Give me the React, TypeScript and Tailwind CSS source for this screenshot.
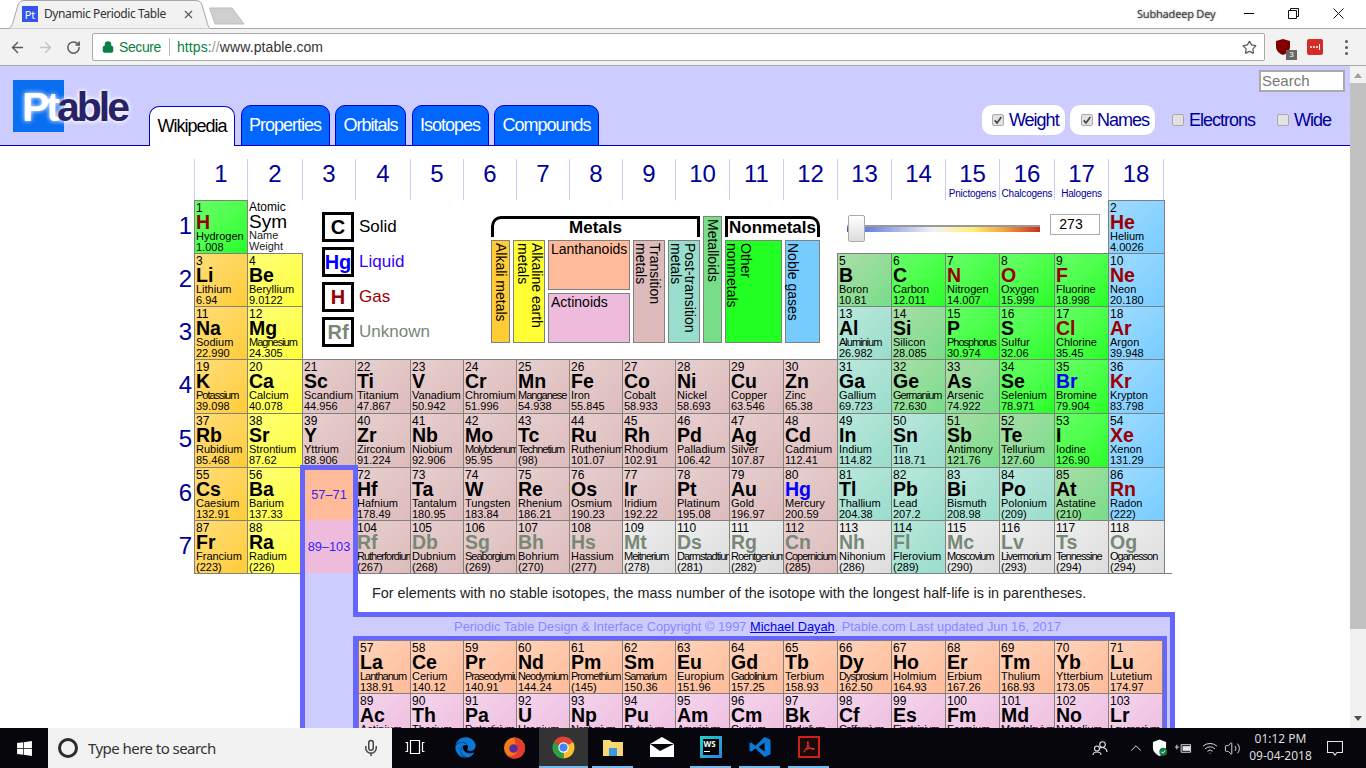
import { ArrowLeft, ArrowRight, ChevronUp, Lock, Mic, RotateCw, Star, Volume2, Wifi, X } from 'lucide-react';
import { FaEdge, FaWindows } from 'react-icons/fa';

type Cat = 'alkali' | 'earth' | 'lan' | 'act' | 'trans' | 'post' | 'semi' | 'non' | 'noble' | 'none';
type El = [number, string, string, string, Cat, ('g' | 'l' | 'u')?];

const catBg: Record<Cat, string> = {
  alkali: 'from-[#ffdd77] to-[#ffcc33]',
  earth: 'from-[#ffff77] to-[#ffff33]',
  lan: 'from-[#ffd4bb] to-[#ffbb99]',
  act: 'from-[#f4d6ee] to-[#eebbdd]',
  trans: 'from-[#e8d0d0] to-[#ddbbbb]',
  post: 'from-[#bbe8dc] to-[#99ddcc]',
  semi: 'from-[#aadda8] to-[#77dd88]',
  non: 'from-[#66ff66] to-[#22ff22]',
  noble: 'from-[#a0dcff] to-[#77ccff]',
  none: 'from-[#efefef] to-[#dddddd]',
};

const stateText = { g: 'text-[#990000]', l: 'text-[#0000ff]', u: 'text-[#778877]' };

// names the site squeezes so they fit the cell
const tight = new Set([
  'Aluminium', 'Magnesium', 'Phosphorus', 'Potassium', 'Manganese', 'Molybdenum', 'Technetium', 'Germanium',
  'Meitnerium', 'Darmstadtium', 'Roentgenium', 'Copernicium', 'Rutherfordium', 'Seaborgium', 'Livermorium',
  'Tennessine', 'Moscovium', 'Oganesson', 'Lanthanum', 'Praseodymium', 'Neodymium', 'Promethium', 'Samarium',
  'Gadolinium', 'Dysprosium', 'Protactinium', 'Neptunium', 'Plutonium', 'Americium', 'Californium',
  'Einsteinium', 'Mendelevium', 'Lawrencium', 'Berkelium',
]);

const row1a: El[] = [[1, 'H', 'Hydrogen', '1.008', 'non', 'g']];
const row1b: El[] = [[2, 'He', 'Helium', '4.0026', 'noble', 'g']];
const row2: El[] = [
  [3, 'Li', 'Lithium', '6.94', 'alkali'], [4, 'Be', 'Beryllium', '9.0122', 'earth'],
  [5, 'B', 'Boron', '10.81', 'semi'], [6, 'C', 'Carbon', '12.011', 'non'], [7, 'N', 'Nitrogen', '14.007', 'non', 'g'],
  [8, 'O', 'Oxygen', '15.999', 'non', 'g'], [9, 'F', 'Fluorine', '18.998', 'non', 'g'], [10, 'Ne', 'Neon', '20.180', 'noble', 'g'],
];
const row3: El[] = [
  [11, 'Na', 'Sodium', '22.990', 'alkali'], [12, 'Mg', 'Magnesium', '24.305', 'earth'],
  [13, 'Al', 'Aluminium', '26.982', 'post'], [14, 'Si', 'Silicon', '28.085', 'semi'], [15, 'P', 'Phosphorus', '30.974', 'non'],
  [16, 'S', 'Sulfur', '32.06', 'non'], [17, 'Cl', 'Chlorine', '35.45', 'non', 'g'], [18, 'Ar', 'Argon', '39.948', 'noble', 'g'],
];
const row4: El[] = [
  [19, 'K', 'Potassium', '39.098', 'alkali'], [20, 'Ca', 'Calcium', '40.078', 'earth'], [21, 'Sc', 'Scandium', '44.956', 'trans'],
  [22, 'Ti', 'Titanium', '47.867', 'trans'], [23, 'V', 'Vanadium', '50.942', 'trans'], [24, 'Cr', 'Chromium', '51.996', 'trans'],
  [25, 'Mn', 'Manganese', '54.938', 'trans'], [26, 'Fe', 'Iron', '55.845', 'trans'], [27, 'Co', 'Cobalt', '58.933', 'trans'],
  [28, 'Ni', 'Nickel', '58.693', 'trans'], [29, 'Cu', 'Copper', '63.546', 'trans'], [30, 'Zn', 'Zinc', '65.38', 'trans'],
  [31, 'Ga', 'Gallium', '69.723', 'post'], [32, 'Ge', 'Germanium', '72.630', 'semi'], [33, 'As', 'Arsenic', '74.922', 'semi'],
  [34, 'Se', 'Selenium', '78.971', 'non'], [35, 'Br', 'Bromine', '79.904', 'non', 'l'], [36, 'Kr', 'Krypton', '83.798', 'noble', 'g'],
];
const row5: El[] = [
  [37, 'Rb', 'Rubidium', '85.468', 'alkali'], [38, 'Sr', 'Strontium', '87.62', 'earth'], [39, 'Y', 'Yttrium', '88.906', 'trans'],
  [40, 'Zr', 'Zirconium', '91.224', 'trans'], [41, 'Nb', 'Niobium', '92.906', 'trans'], [42, 'Mo', 'Molybdenum', '95.95', 'trans'],
  [43, 'Tc', 'Technetium', '(98)', 'trans'], [44, 'Ru', 'Ruthenium', '101.07', 'trans'], [45, 'Rh', 'Rhodium', '102.91', 'trans'],
  [46, 'Pd', 'Palladium', '106.42', 'trans'], [47, 'Ag', 'Silver', '107.87', 'trans'], [48, 'Cd', 'Cadmium', '112.41', 'trans'],
  [49, 'In', 'Indium', '114.82', 'post'], [50, 'Sn', 'Tin', '118.71', 'post'], [51, 'Sb', 'Antimony', '121.76', 'semi'],
  [52, 'Te', 'Tellurium', '127.60', 'semi'], [53, 'I', 'Iodine', '126.90', 'non'], [54, 'Xe', 'Xenon', '131.29', 'noble', 'g'],
];
const row6a: El[] = [[55, 'Cs', 'Caesium', '132.91', 'alkali'], [56, 'Ba', 'Barium', '137.33', 'earth']];
const row6b: El[] = [
  [72, 'Hf', 'Hafnium', '178.49', 'trans'], [73, 'Ta', 'Tantalum', '180.95', 'trans'], [74, 'W', 'Tungsten', '183.84', 'trans'],
  [75, 'Re', 'Rhenium', '186.21', 'trans'], [76, 'Os', 'Osmium', '190.23', 'trans'], [77, 'Ir', 'Iridium', '192.22', 'trans'],
  [78, 'Pt', 'Platinum', '195.08', 'trans'], [79, 'Au', 'Gold', '196.97', 'trans'], [80, 'Hg', 'Mercury', '200.59', 'trans', 'l'],
  [81, 'Tl', 'Thallium', '204.38', 'post'], [82, 'Pb', 'Lead', '207.2', 'post'], [83, 'Bi', 'Bismuth', '208.98', 'post'],
  [84, 'Po', 'Polonium', '(209)', 'post'], [85, 'At', 'Astatine', '(210)', 'semi'], [86, 'Rn', 'Radon', '(222)', 'noble', 'g'],
];
const row7a: El[] = [[87, 'Fr', 'Francium', '(223)', 'alkali'], [88, 'Ra', 'Radium', '(226)', 'earth']];
const row7b: El[] = [
  [104, 'Rf', 'Rutherfordium', '(267)', 'trans', 'u'], [105, 'Db', 'Dubnium', '(268)', 'trans', 'u'], [106, 'Sg', 'Seaborgium', '(269)', 'trans', 'u'],
  [107, 'Bh', 'Bohrium', '(270)', 'trans', 'u'], [108, 'Hs', 'Hassium', '(277)', 'trans', 'u'], [109, 'Mt', 'Meitnerium', '(278)', 'none', 'u'],
  [110, 'Ds', 'Darmstadtium', '(281)', 'none', 'u'], [111, 'Rg', 'Roentgenium', '(282)', 'none', 'u'], [112, 'Cn', 'Copernicium', '(285)', 'trans', 'u'],
  [113, 'Nh', 'Nihonium', '(286)', 'none', 'u'], [114, 'Fl', 'Flerovium', '(289)', 'post', 'u'], [115, 'Mc', 'Moscovium', '(290)', 'none', 'u'],
  [116, 'Lv', 'Livermorium', '(293)', 'none', 'u'], [117, 'Ts', 'Tennessine', '(294)', 'none', 'u'], [118, 'Og', 'Oganesson', '(294)', 'none', 'u'],
];
const lanthanides: El[] = [
  [57, 'La', 'Lanthanum', '138.91', 'lan'], [58, 'Ce', 'Cerium', '140.12', 'lan'], [59, 'Pr', 'Praseodymium', '140.91', 'lan'],
  [60, 'Nd', 'Neodymium', '144.24', 'lan'], [61, 'Pm', 'Promethium', '(145)', 'lan'], [62, 'Sm', 'Samarium', '150.36', 'lan'],
  [63, 'Eu', 'Europium', '151.96', 'lan'], [64, 'Gd', 'Gadolinium', '157.25', 'lan'], [65, 'Tb', 'Terbium', '158.93', 'lan'],
  [66, 'Dy', 'Dysprosium', '162.50', 'lan'], [67, 'Ho', 'Holmium', '164.93', 'lan'], [68, 'Er', 'Erbium', '167.26', 'lan'],
  [69, 'Tm', 'Thulium', '168.93', 'lan'], [70, 'Yb', 'Ytterbium', '173.05', 'lan'], [71, 'Lu', 'Lutetium', '174.97', 'lan'],
];
const actinides: El[] = [
  [89, 'Ac', 'Actinium', '(227)', 'act'], [90, 'Th', 'Thorium', '232.04', 'act'], [91, 'Pa', 'Protactinium', '231.04', 'act'],
  [92, 'U', 'Uranium', '238.03', 'act'], [93, 'Np', 'Neptunium', '(237)', 'act'], [94, 'Pu', 'Plutonium', '(244)', 'act'],
  [95, 'Am', 'Americium', '(243)', 'act'], [96, 'Cm', 'Curium', '(247)', 'act'], [97, 'Bk', 'Berkelium', '(247)', 'act'],
  [98, 'Cf', 'Californium', '(251)', 'act'], [99, 'Es', 'Einsteinium', '(252)', 'act'], [100, 'Fm', 'Fermium', '(257)', 'act'],
  [101, 'Md', 'Mendelevium', '(258)', 'act'], [102, 'No', 'Nobelium', '(259)', 'act'], [103, 'Lr', 'Lawrencium', '(266)', 'act'],
];

const groups: [string, string?][] = [
  ['1'], ['2'], ['3'], ['4'], ['5'], ['6'], ['7'], ['8'], ['9'], ['10'], ['11'], ['12'], ['13'], ['14'],
  ['15', 'Pnictogens'], ['16', 'Chalcogens'], ['17', 'Halogens'], ['18'],
];

function Cell({ el }: { el: El }) {
  const [z, sym, name, weight, cat, state] = el;
  return (
    <div className={`-mr-px -mb-px min-w-0 overflow-hidden whitespace-nowrap border border-[#808080] bg-linear-to-br pt-px pl-px text-black ${catBg[cat]}`}>
      <div className="text-[12px] leading-[12px]">{z}</div>
      <div className={`mb-px text-[19.5px] leading-[16px] font-bold ${state ? stateText[state] : ''}`}>{sym}</div>
      <div className={`text-[11px] leading-[10px] ${tight.has(name) ? 'tracking-[-1px]' : ''}`}>{name}</div>
      <div className="text-[11px] leading-[12px]">{weight}</div>
    </div>
  );
}

function Period({ n }: { n: number }) {
  return <div className="flex items-center justify-end pr-[2px] pb-[2px] text-[24px] text-[#000099]">{n}</div>;
}

function StateKey({ sym, label, box, text }: { sym: string; label: string; box: string; text: string }) {
  return (
    <div className="flex items-center gap-[5px]">
      <div className={`flex h-[30px] w-[32px] items-center justify-center border-[3px] border-black text-[20px] font-bold ${box}`}>{sym}</div>
      <span className={`text-[17px] ${text}`}>{label}</span>
    </div>
  );
}

function Legend() {
  return (
    <div className="col-span-10 row-span-3 flex pl-[20px]">
      <div className="flex w-[169px] flex-col gap-[5px] pt-[12px]">
        <StateKey sym="C" label="Solid" box="text-black" text="text-black" />
        <StateKey sym="Hg" label="Liquid" box="text-[#0000ff]" text="text-[#3300ff]" />
        <StateKey sym="H" label="Gas" box="text-[#990000]" text="text-[#990000]" />
        <StateKey sym="Rf" label="Unknown" box="text-[#778877]" text="text-[#778877]" />
      </div>
      <div className="flex gap-[3px] pt-[16px] text-[14px] text-black">
        <div className="w-[209px]">
          <div className="mb-[3px] h-[21px] rounded-tl-[10px] border-x-[3px] border-t-[3px] border-black text-center text-[17px] leading-[18px] font-bold">Metals</div>
          <div className="flex h-[103px] gap-[3px]">
            <div className="w-[19px] border border-[#808080] bg-[#ffcc33] pt-[2px] leading-[17px] [writing-mode:vertical-rl]">Alkali metals</div>
            <div className="w-[32px] border border-[#808080] bg-[#ffff33] pt-[2px] leading-[14px] [writing-mode:vertical-rl]">Alkaline earth<br />metals</div>
            <div className="flex w-[82px] flex-col gap-[3px]">
              <div className="h-[50px] border border-[#808080] bg-[#ffbb99] pl-[2px] leading-[16px]">Lanthanoids</div>
              <div className="h-[50px] border border-[#808080] bg-[#eebbdd] pl-[2px] leading-[16px]">Actinoids</div>
            </div>
            <div className="w-[32px] border border-[#808080] bg-[#ddbbbb] pt-[2px] pr-[2px] leading-[14px] [writing-mode:vertical-rl]">Transition<br />metals</div>
            <div className="w-[32px] border border-[#808080] bg-[#99ddcc] pt-[2px] pr-[2px] leading-[14px] [writing-mode:vertical-rl]">Post-transition<br />metals</div>
          </div>
        </div>
        <div className="h-[127px] w-[19px] border border-[#808080] bg-[#77dd88] pt-[2px] leading-[17px] [writing-mode:vertical-rl]">Metalloids</div>
        <div className="w-[95px]">
          <div className="mb-[3px] h-[21px] rounded-tr-[10px] border-x-[3px] border-t-[3px] border-black text-center text-[17px] leading-[18px] font-bold">Nonmetals</div>
          <div className="flex h-[103px] gap-[3px]">
            <div className="w-[57px] border border-[#808080] bg-[#22ff22] pt-[2px] pr-[28px] leading-[14px] [writing-mode:vertical-rl]">Other<br />nonmetals</div>
            <div className="w-[35px] border border-[#808080] bg-[#77ccff] pt-[2px] pr-[19px] leading-[14px] [writing-mode:vertical-rl]">Noble gases</div>
          </div>
        </div>
      </div>
    </div>
  );
}

function Slider() {
  return (
    <div className="col-span-5 flex pt-[14px] pl-[10px]">
      <div className="relative mt-[11px] h-[7px] w-[193px] border-t-2 border-[#999999]">
        <div className="h-[5px] bg-[linear-gradient(to_right,#3f5fdc,#f3f3f3_45%,#ffee77_65%,#f0a040_82%,#c83020)]" />
        <div className="absolute -top-[12px] left-px h-[27px] w-[17px] rounded-[2px] border border-[#aaaaaa] bg-linear-to-b from-[#ffffff] to-[#dddddd]" />
      </div>
      <div className="ml-[10px] flex h-[21px] w-[50px] items-center justify-center border border-[#aaaaaa] pr-[8px] text-[14px] text-black">273</div>
    </div>
  );
}

function PeriodicTable() {
  return (
    <div className="ml-[175px] grid w-[990px] grid-cols-[19px_53px_55px_53px_55px_53px_53px_53px_53px_53px_54px_54px_54px_54px_54px_54px_55px_54px_56px] grid-rows-[41px_53px_53px_53px_54px_54px_53px_53px]">
      <div />
      {groups.map(([n, label]) => (
        <div key={n} className={`border-l border-[#ccccff] text-center text-[#000099] ${n === '18' ? 'border-r' : ''}`}>
          <div className="text-[24px] leading-[30px]">{n}</div>
          {label && <div className="text-[10px] leading-[10px] tracking-[-0.2px]">{label}</div>}
        </div>
      ))}

      <Period n={1} />
      {row1a.map((el) => <Cell key={el[0]} el={el} />)}
      <div className="pl-[2px] text-black">
        <div className="pt-px text-[12px] leading-[12px]">Atomic</div>
        <div className="text-[19px] leading-[17px]">Sym</div>
        <div className="text-[11px] leading-[10px] text-[#222222]">Name</div>
        <div className="text-[11px] leading-[12px] text-[#222222]">Weight</div>
      </div>
      <Legend />
      <Slider />
      {row1b.map((el) => <Cell key={el[0]} el={el} />)}

      <Period n={2} />
      {row2.map((el) => <Cell key={el[0]} el={el} />)}
      <Period n={3} />
      {row3.map((el) => <Cell key={el[0]} el={el} />)}
      <Period n={4} />
      {row4.map((el) => <Cell key={el[0]} el={el} />)}
      <Period n={5} />
      {row5.map((el) => <Cell key={el[0]} el={el} />)}
      <Period n={6} />
      {row6a.map((el) => <Cell key={el[0]} el={el} />)}
      <div className="relative z-10 row-span-2 -mt-[2px] -mr-[3px] -ml-[2px] flex flex-col border-x-[5px] border-t-[5px] border-[#6666ff] bg-[#ccccff] text-center text-[12.8px] text-[#3322ff]">
        <div className="flex h-[50px] items-center justify-center bg-[#ffbb99]">57–71</div>
        <div className="flex h-[53px] items-center justify-center bg-[#eebbdd]">89–103</div>
      </div>
      {row6b.map((el) => <Cell key={el[0]} el={el} />)}
      <Period n={7} />
      {row7a.map((el) => <Cell key={el[0]} el={el} />)}
      {row7b.map((el) => <Cell key={el[0]} el={el} />)}
    </div>
  );
}

function LowerPanel() {
  return (
    <div className="ml-[300px]">
      <div className="flex h-[39px] w-[872px]">
        <div className="w-[58px] border-x-[5px] border-[#6666ff] bg-[#ccccff]" />
        <div className="flex-1 border-t border-[#808080] pl-[14px] text-[14.4px] leading-[38px] text-[#222222]">
          For elements with no stable isotopes, the mass number of the isotope with the longest half-life is in parentheses.
        </div>
      </div>
      <div className="w-[875px] border-x-[5px] border-[#6666ff] bg-[#ccccff]">
        <div className="-mr-[5px] ml-[48px] h-[24px] border-t-[5px] border-[#6666ff] pr-[13px] text-center text-[12.8px] leading-[19px] text-[#8888ff]">
          Periodic Table Design &amp; Interface Copyright © 1997 <span className="text-[#0000ee] underline">Michael Dayah</span>. Ptable.com Last updated Jun 16, 2017
        </div>
        <div className="mr-[3px] ml-[48px] border-[5px] border-[#6666ff]">
          <div className="-mt-px grid grid-cols-[52px_53px_53px_53px_53px_53px_54px_54px_54px_54px_54px_54px_55px_54px_54px] grid-rows-[53px_53px]">
            {lanthanides.map((el) => <Cell key={el[0]} el={el} />)}
            {actinides.map((el) => <Cell key={el[0]} el={el} />)}
          </div>
        </div>
      </div>
    </div>
  );
}

function Check({ checked }: { checked?: boolean }) {
  return (
    <span className="flex h-[12px] w-[12px] items-center justify-center rounded-[2px] border border-[#aaaaaa] bg-[#e2e2e2]">
      {checked && (
        <svg viewBox="0 0 12 12" className="h-[10px] w-[10px]">
          <path d="M2 6.5 L4.8 9.5 L10 2.5" fill="none" stroke="#444444" strokeWidth="2" />
        </svg>
      )}
    </span>
  );
}

function SiteHeader() {
  return (
    <div className="flex h-[80px] items-end border-b border-[#0000cc] bg-[#ccccff]">
      <div className="mb-[13px] ml-[13px] h-[52px] w-[51px] bg-[#0a6ef0] pt-[3px] pl-[9px] text-[41px] leading-[48px] font-bold tracking-[-3px] whitespace-nowrap">
        <span className="text-white [text-shadow:0_0_5px_#ffffff]">Pt</span>
        <span className="text-[#2a2266] [text-shadow:0_0_5px_#ffffff,0_0_5px_#ffffff]">able</span>
      </div>
      <div className="-mb-px ml-[85px] flex items-end gap-[5.5px] text-[18px] tracking-[-1px]">
        <div className="flex h-[40px] w-[86px] items-center justify-center rounded-t-[10px] border border-b-0 border-[#0000cc] bg-white text-black">Wikipedia</div>
        <div className="flex h-[41px] w-[89px] items-center justify-center rounded-t-[10px] border border-[#0000cc] bg-[#0066ff] text-white">Properties</div>
        <div className="flex h-[41px] w-[71px] items-center justify-center rounded-t-[10px] border border-[#0000cc] bg-[#0066ff] text-white">Orbitals</div>
        <div className="flex h-[41px] w-[77px] items-center justify-center rounded-t-[10px] border border-[#0000cc] bg-[#0066ff] text-white">Isotopes</div>
        <div className="flex h-[41px] w-[105px] items-center justify-center rounded-t-[10px] border border-[#0000cc] bg-[#0066ff] text-white">Compounds</div>
      </div>
      <div className="ml-auto flex h-full flex-col items-end pt-[4px] pr-[5px]">
        <div className="flex h-[22px] w-[86px] items-center border-2 border-[#aaaaaa] bg-white pl-[1px] text-[15px] text-[#777777]">Search</div>
        <div className="mt-[13px] flex h-[30px] items-center pr-[14px] text-[18px] tracking-[-1px] text-[#000099]">
          <div className="flex h-[30px] w-[83px] items-center gap-[5px] rounded-[10px] bg-white pl-[10px]"><Check checked />Weight</div>
          <div className="ml-[5px] flex h-[30px] w-[85px] items-center gap-[4px] rounded-[10px] bg-white pl-[11px]"><Check checked />Names</div>
          <div className="ml-[17px] flex items-center gap-[5px]"><Check />Electrons</div>
          <div className="ml-[22px] flex items-center gap-[5px]"><Check />Wide</div>
        </div>
      </div>
    </div>
  );
}

function TitleBar() {
  return (
    <div className="flex h-[29px] items-start border-b border-[#a8a8a8] bg-white font-['Noto_Sans',sans-serif]">
      <div className="relative z-10 ml-[6px] flex h-[29px] w-[206px] items-center pb-[1px] pl-[16px]">
        <svg viewBox="0 0 206 29" className="absolute inset-0 h-[29px] w-[206px]">
          <path d="M0.5 29 C4 29 6 26 7 22 L12 5 C13 2 15 0.5 18 0.5 H190 C193 0.5 195 2 196 5 L201 22 C202 26 203 29 205.5 29 Z" fill="#f2f2f2" stroke="#a8a8a8" />
        </svg>
        <div className="relative flex h-[16px] w-[16px] items-center justify-center bg-[#3355ee] text-[11px] leading-none text-white">Pt</div>
        <span className="relative ml-[6px] w-[138px] text-[12px] tracking-[-0.4px] whitespace-nowrap text-[#333333]">Dynamic Periodic Table</span>
        <X size={13} strokeWidth={2} className="relative text-[#555555]" />
      </div>
      <svg viewBox="0 0 36 18" className="mt-[7px] -ml-[3px] h-[18px] w-[36px]">
        <path d="M0.5 1 H23 L35 17 H6 Z" fill="#cfcfcf" stroke="#bdbdbd" />
      </svg>
      <span className="ml-[892px] pt-[6px] text-[11px] leading-[16px] tracking-[-0.2px] whitespace-nowrap text-[#444444] [text-shadow:0_0_2px_#888888]">Subhadeep Dey</span>
      <div className="mt-[13px] ml-[29px] h-px w-[10px] bg-black" />
      <svg viewBox="0 0 11 11" className="mt-[8px] ml-[34px] h-[11px] w-[11px]" fill="none" stroke="#111111">
        <path d="M0.5 2.5 H8.5 V10.5 H0.5 Z M2.5 2.5 V0.5 H10.5 V8.5 H8.5" />
      </svg>
      <svg viewBox="0 0 11 11" className="mt-[8px] ml-[34px] h-[11px] w-[11px]" fill="none" stroke="#111111">
        <path d="M0.5 0.5 L10.5 10.5 M10.5 0.5 L0.5 10.5" />
      </svg>
    </div>
  );
}

function Toolbar() {
  return (
    <div className="flex h-[37px] items-center border-b border-[#a8a8a8] bg-[#f2f2f2] font-['Liberation_Sans',sans-serif]">
      <ArrowLeft size={17} strokeWidth={2} className="ml-[9px] text-[#5a5a5a]" />
      <ArrowRight size={17} strokeWidth={2} className="ml-[11px] text-[#c4c4c4]" />
      <RotateCw size={15} strokeWidth={2.4} className="ml-[12px] text-[#5a5a5a]" />
      <div className="ml-[11px] flex h-[28px] w-[1173px] items-center rounded-[2px] border border-[#a9a9a9] bg-white pl-[9px] text-[14px]">
        <Lock size={12} strokeWidth={3} className="fill-[#0b8043] text-[#0b8043]" />
        <span className="ml-[5px] tracking-[-0.4px] text-[#0b8043]">Secure</span>
        <div className="mx-[8px] h-[18px] w-px bg-[#bbbbbb]" />
        <span className="-ml-px tracking-[0.1px] text-[#0b8043]">https:</span>
        <span className="tracking-[0.1px] text-[#999999]">//</span>
        <span className="tracking-[0.1px] text-[#333333]">www.ptable.com</span>
        <Star size={15} strokeWidth={2} className="mr-[7px] ml-auto text-[#5a5a5a]" />
      </div>
      <div className="relative ml-[11px] h-[16px] w-[14px]">
        <svg viewBox="0 0 14 16" className="h-[16px] w-[14px]">
          <path d="M7 0 L14 2 V8 C14 12 10 15 7 16 C4 15 0 12 0 8 V2 Z" fill="#800000" />
        </svg>
        <span className="absolute -right-[7px] -bottom-[5px] flex h-[10px] w-[11px] items-center justify-center bg-[#666666] text-[8px] text-white">3</span>
      </div>
      <div className="ml-[17px] flex h-[16px] w-[16px] items-center justify-center gap-[1px] rounded-[2px] bg-[#d32d27]">
        <span className="h-[2px] w-[2px] rounded-full bg-white" />
        <span className="h-[2px] w-[2px] rounded-full bg-white" />
        <span className="h-[2px] w-[2px] rounded-full bg-white" />
        <span className="h-[6px] w-px bg-white" />
      </div>
      <div className="ml-[22px] flex flex-col gap-[3px]">
        <span className="h-[3px] w-[3px] rounded-full bg-[#5a5a5a]" />
        <span className="h-[3px] w-[3px] rounded-full bg-[#5a5a5a]" />
        <span className="h-[3px] w-[3px] rounded-full bg-[#5a5a5a]" />
      </div>
    </div>
  );
}

function Scrollbar() {
  return (
    <div className="flex w-[16px] flex-col items-center bg-[#f1f1f1]">
      <svg viewBox="0 0 8 5" className="mt-[7px] mb-[5px] h-[5px] w-[8px]"><path d="M4 0 L8 5 H0 Z" fill="#a0a0a0" /></svg>
      <div className="h-[546px] w-full bg-[#c1c1c1]" />
      <svg viewBox="0 0 8 5" className="mt-auto mb-[7px] h-[5px] w-[8px]"><path d="M0 0 H8 L4 5 Z" fill="#505050" /></svg>
    </div>
  );
}

function TaskButton({ children, open, active }: { children: React.ReactNode; open?: boolean; active?: boolean }) {
  return (
    <div className={`flex h-[40px] w-[49px] flex-col items-center ${active ? 'bg-[#333333]' : ''}`}>
      <div className="flex flex-1 items-center justify-center">{children}</div>
      <div className={`h-[2px] ${active ? 'w-full' : 'w-[41px]'} ${open ? 'bg-[#76b9ed]' : ''}`} />
    </div>
  );
}

function ChromeIcon() {
  return (
    <svg viewBox="0 0 24 24" className="h-[23px] w-[23px]">
      <circle cx="12" cy="12" r="8" fill="none" stroke="#db4437" strokeWidth="7" strokeDasharray="16.76 33.51" transform="rotate(210 12 12)" />
      <circle cx="12" cy="12" r="8" fill="none" stroke="#fbc02d" strokeWidth="7" strokeDasharray="16.76 33.51" transform="rotate(-30 12 12)" />
      <circle cx="12" cy="12" r="8" fill="none" stroke="#2f9e44" strokeWidth="7" strokeDasharray="16.76 33.51" transform="rotate(90 12 12)" />
      <circle cx="12" cy="12" r="5.4" fill="#ffffff" />
      <circle cx="12" cy="12" r="4.2" fill="#4285f4" />
    </svg>
  );
}

function Taskbar() {
  return (
    <div className="flex h-[40px] items-stretch bg-[#06060c] font-['Noto_Sans',sans-serif]">
      <div className="flex w-[48px] items-center justify-center">
        <FaWindows size={17} className="text-white" />
      </div>
      <div className="flex w-[344px] items-center bg-[#f2f2f2] pl-[10px]">
        <div className="h-[20px] w-[20px] rounded-full border-[3px] border-[#2b2b2b]" />
        <span className="ml-[10px] text-[15px] tracking-[-0.55px] text-[#333333]">Type here to search</span>
        <Mic size={18} className="mr-[12px] ml-auto text-[#444444]" />
      </div>
      <TaskButton>
        <svg viewBox="0 0 20 16" className="-ml-[3px] h-[16px] w-[20px]" fill="none" stroke="#ffffff" strokeWidth="1.2">
          <path d="M5.5 1.5 H14.5 V14.5 H5.5 Z M0.5 3.5 H2.5 V12.5 H0.5 M19.5 3.5 H17.5 V12.5 H19.5" />
        </svg>
      </TaskButton>
      <TaskButton><FaEdge size={21} className="text-[#0a78d7]" /></TaskButton>
      <TaskButton>
        <svg viewBox="0 0 24 24" className="h-[23px] w-[23px]">
          <circle cx="12" cy="12.5" r="11" fill="#f27a1a" />
          <path d="M12 1 C20 4 23 8 23 13 C23 19 18 23.5 12 23.5 C9 23.5 6 22 4 20 C11 22 16 18 15 13 C14.5 10 12 8 12 1 Z" fill="#e63b2e" />
          <circle cx="11" cy="13" r="4.5" fill="#5b2c9f" />
        </svg>
      </TaskButton>
      <TaskButton active open><ChromeIcon /></TaskButton>
      <TaskButton open>
        <svg viewBox="0 0 22 20" className="h-[20px] w-[22px]">
          <path d="M1 3 H8 L10 5 H21 V19 H1 Z" fill="#f7d774" />
          <rect x="7" y="11" width="8" height="8" fill="#3a9bdc" />
        </svg>
      </TaskButton>
      <TaskButton>
        <svg viewBox="0 0 24 20" className="h-[20px] w-[24px]">
          <path d="M0 7 L12 0 L24 7 V20 H0 Z" fill="#ffffff" />
          <path d="M0 7 L24 7 L10 14 Z" fill="#06060c" />
        </svg>
      </TaskButton>
      <TaskButton open>
        <div className="flex h-[22px] w-[22px] items-end bg-linear-to-br from-[#22d3c5] to-[#2f7fe0] p-[3px]">
          <div className="flex h-full w-full flex-col bg-black pl-[1px] text-[8px] leading-[9px] font-bold text-white">
            WS
            <span className="mt-[3px] h-px w-[6px] bg-white" />
          </div>
        </div>
      </TaskButton>
      <TaskButton open>
        <svg viewBox="0 0 24 24" className="h-[22px] w-[22px]">
          <path fillRule="evenodd" d="M17 1 L7 10.5 L2.5 7 L0.5 8 V16 L2.5 17 L7 13.5 L17 23 L23.5 20 V4 Z M17 7 V17 L10.5 12 Z" fill="#0a78d7" />
        </svg>
      </TaskButton>
      <TaskButton open>
        <div className="flex h-[22px] w-[22px] items-center justify-center border-2 border-[#d0201a] bg-[#1a0a0a]">
          <svg viewBox="0 0 16 16" className="h-[14px] w-[14px]" fill="none" stroke="#e8352c" strokeWidth="1.2">
            <path d="M2 14 C5 11 8 5 7 2 C6.5 1 6 3 7 6 C8 9 11 11 14 10.5 C15 10 12 9 9 9.5 C6 10 3 12 2 14 Z" />
          </svg>
        </div>
      </TaskButton>
      <div className="ml-[259px] flex items-center text-[#e6e6e6]">
        <svg viewBox="0 0 16 16" className="h-[16px] w-[16px]" fill="none" stroke="#e6e6e6" strokeWidth="1.1">
          <circle cx="10.5" cy="4.5" r="2.8" />
          <circle cx="5" cy="8.5" r="2.5" />
          <path d="M1 15 C1 11 9 11 9 15 M8 8 C10 7 15 7.5 15 12" />
        </svg>
        <ChevronUp size={18} strokeWidth={1.3} className="ml-[19px]" />
        <svg viewBox="0 0 16 18" className="ml-[7px] h-[18px] w-[15px]">
          <path d="M8 0 L15 2.5 V9 C15 13 11.5 16 8 17.5 C4.5 16 1 13 1 9 V2.5 Z" fill="#ffffff" />
          <circle cx="12" cy="13" r="4.2" fill="#107c41" />
          <path d="M10 13 L11.5 14.5 L14 11.5" fill="none" stroke="#ffffff" strokeWidth="1" />
        </svg>
        <svg viewBox="0 0 18 12" className="ml-[8px] h-[12px] w-[17px]" fill="none" stroke="#e6e6e6">
          <path d="M0 5 H4 M2 2.5 V7.5 M6.5 2.5 H16.5 V10.5 H6.5 Z" />
          <rect x="8" y="4" width="8" height="5" fill="#e6e6e6" stroke="none" />
        </svg>
        <Wifi size={16} strokeWidth={1.4} className="ml-[10px]" />
        <Volume2 size={17} strokeWidth={1.3} className="ml-[6px]" />
        <div className="ml-[6px] flex w-[67px] -translate-y-px flex-col items-center text-[12px] leading-[17px] text-[#dddddd]">
          <span>01:12 PM</span>
          <span>09-04-2018</span>
        </div>
        <svg viewBox="0 0 16 15" className="ml-[13px] h-[15px] w-[16px]" fill="none" stroke="#e6e6e6" strokeWidth="1.1">
          <path d="M0.5 0.5 H15.5 V11.5 H10 L8 14 L6 11.5 H0.5 Z" />
        </svg>
      </div>
    </div>
  );
}

export default function App() {
  return (
    <div className="flex h-[768px] w-[1366px] flex-col overflow-hidden bg-white font-['Liberation_Sans',Arial,sans-serif]">
      <TitleBar />
      <Toolbar />
      <div className="flex min-h-0 flex-1">
        <div className="min-w-0 flex-1 overflow-hidden">
          <SiteHeader />
          <div className="mt-[13px]">
            <PeriodicTable />
            <LowerPanel />
          </div>
        </div>
        <Scrollbar />
      </div>
      <Taskbar />
    </div>
  );
}
